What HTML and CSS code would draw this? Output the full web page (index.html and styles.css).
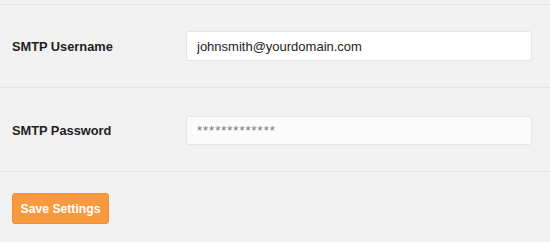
FILE: index.html
```html
<!DOCTYPE html>
<html>
<head>
<meta charset="utf-8">
<link rel="stylesheet" href="styles.css">
</head>
<body>
<form class="settings">
  <div class="row">
    <label class="label" for="user">SMTP Username</label>
    <input class="field" id="user" type="text" value="johnsmith@yourdomain.com">
  </div>
  <div class="row">
    <label class="label" for="pass">SMTP Password</label>
    <input class="field field-pass" id="pass" type="text" value="*************">
  </div>
  <div class="actions">
    <button class="btn" type="button">Save Settings</button>
  </div>
</form>
</body>
</html>
```
FILE: styles.css
```css
html, body {
  margin: 0;
  padding: 0;
  background: #f1f1f1;
}
body {
  padding-top: 4px;
  font-family: "Liberation Sans", Arial, sans-serif;
  color: #23282d;
}
.settings {
  border-top: 1px solid #e6e4e5;
}
.row {
  display: flex;
  align-items: center;
  padding: 26px 18px 26px 12px;
  border-bottom: 1px solid #e6e4e5;
}
.row + .row {
  padding-top: 28px;
  padding-bottom: 26px;
}
.label {
  width: 174px;
  font-size: 12.8px;
  font-weight: bold;
  color: #222;
}
.field {
  box-sizing: border-box;
  width: 346px;
  height: 30px;
  margin: 0;
  padding: 0 10px;
  border: 1px solid #e6e4e5;
  border-radius: 3px;
  background: #fff;
  font-family: "Liberation Sans", Arial, sans-serif;
  font-size: 13px;
  color: #222;
  outline: none;
}
.field-pass {
  height: 29px;
  background: #fbfbfb;
  color: #777;
  letter-spacing: 1px;
  font-size: 13px;
}
.actions {
  padding: 21px 12px;
}
.btn {
  box-sizing: border-box;
  width: 97px;
  height: 31px;
  padding: 0;
  border: 1px solid #ec8f35;
  border-radius: 3px;
  background: #f6993f;
  color: #fff;
  font-family: "Liberation Sans", Arial, sans-serif;
  font-size: 12.2px;
  font-weight: bold;
  cursor: pointer;
}
```
